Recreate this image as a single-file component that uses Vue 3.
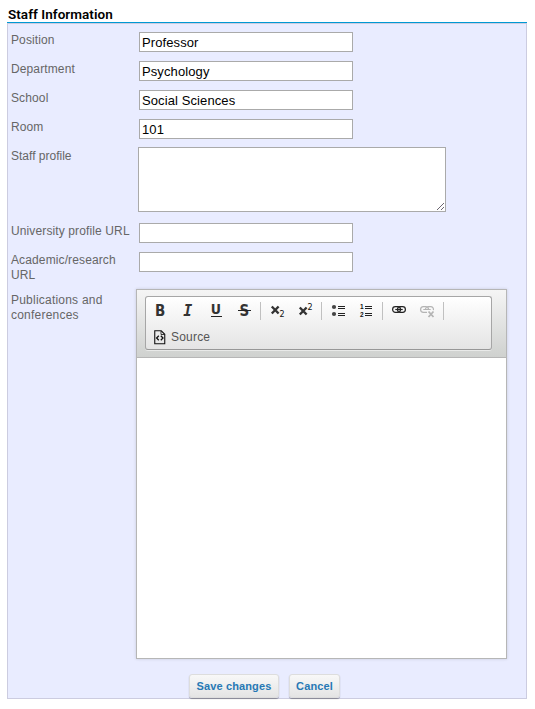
<script setup>
import { ref } from 'vue'

const shortFields = ref([
  { label: 'Position', value: 'Professor' },
  { label: 'Department', value: 'Psychology' },
  { label: 'School', value: 'Social Sciences' },
  { label: 'Room', value: '101' },
])
const linkFields = ref([
  { label: 'University profile URL', value: '' },
  { label: 'Academic/research URL', value: '' },
])
const profile = ref('')
</script>

<template>
  <form class="page" @submit.prevent>
    <h1 class="title">Staff Information</h1>
    <section class="panel">
      <div v-for="f in shortFields" :key="f.label" class="row">
        <label class="label">{{ f.label }}</label>
        <input v-model="f.value" class="input" type="text" />
      </div>
      <div class="row profile-row">
        <label class="label">Staff profile</label>
        <div class="area-wrap">
          <textarea v-model="profile" class="area"></textarea>
          <svg class="grip" width="8" height="8" shape-rendering="crispEdges">
            <g fill="#6b6570">
              <rect v-for="i in 7" :key="'a' + i" :x="i - 1" :y="7 - i" width="1" height="1" />
              <rect v-for="i in 3" :key="'b' + i" :x="i + 3" :y="7 - i" width="1" height="1" />
            </g>
          </svg>
        </div>
      </div>
      <div v-for="f in linkFields" :key="f.label" class="row">
        <label class="label">{{ f.label }}</label>
        <input v-model="f.value" class="input" type="text" />
      </div>
      <div class="row editor-row">
        <label class="label">Publications and conferences</label>
        <div class="editor">
          <div class="toolbar">
            <div class="group">
              <div class="tools">
                <svg class="tool" viewBox="0 0 28 26"><text x="9" y="17.6" class="glyph">B</text></svg>
                <svg class="tool" viewBox="0 0 28 26"><text x="9.3" y="17.6" class="glyph slant">I</text></svg>
                <svg class="tool" viewBox="0 0 28 26">
                  <text x="8.8" y="16.4" class="glyph under">U</text>
                  <rect x="9" y="18" width="11" height="1" fill="#222" />
                </svg>
                <svg class="tool" viewBox="0 0 28 26">
                  <text x="9.4" y="17.6" class="glyph">S</text>
                  <rect x="8" y="12" width="13" height="1" fill="#222" />
                </svg>
                <i class="sep"></i>
                <svg class="tool" viewBox="0 0 28 26">
                  <path class="cross" d="M8.8 8.5l6.8 7M15.6 8.5l-6.8 7" />
                  <text x="16.4" y="19" class="tiny">2</text>
                </svg>
                <svg class="tool" viewBox="0 0 28 26">
                  <path class="cross" d="M8.8 9.5l6.8 7M15.6 9.5l-6.8 7" />
                  <text x="16.4" y="11.5" class="tiny">2</text>
                </svg>
                <i class="sep"></i>
                <svg class="tool" viewBox="0 0 28 26">
                  <circle cx="10" cy="9" r="2.1" fill="#444" />
                  <circle cx="10" cy="16" r="2.1" fill="#444" />
                  <path class="lines" d="M14 8.5h7M14 10.5h7M14 15.5h7M14 17.5h7" />
                </svg>
                <svg class="tool" viewBox="0 0 28 26">
                  <text x="8" y="11" class="tiny num">1</text>
                  <text x="8" y="19" class="tiny num">2</text>
                  <path class="lines" d="M13 8.5h7M13 10.5h7M13 15.5h7M13 17.5h7" />
                </svg>
                <i class="sep"></i>
                <svg class="tool" viewBox="0 0 28 26">
                  <g class="chain">
                    <rect x="7.6" y="8.6" width="7.9" height="5.8" rx="2.8" />
                    <rect x="12.5" y="8.6" width="7.9" height="5.8" rx="2.8" />
                    <path d="M10.3 11.5h7.4" />
                  </g>
                </svg>
                <svg class="tool" viewBox="0 0 28 26">
                  <g class="chain off">
                    <path d="M14 14.4h-3.6a2.8 2.9 0 0 1 0-5.8h2.3a2.8 2.9 0 0 1 2.8 2.9M12.5 11.5a2.8 2.9 0 0 1 2.8-2.9h2.3a2.8 2.9 0 0 1 2.8 3.6M10.3 11.5h7.4" />
                    <path d="M15.5 13.5l5 5.5M20.5 13.5l-5 5.5" stroke-width="1.8" />
                  </g>
                </svg>
                <i class="sep"></i>
              </div>
              <button type="button" class="source">
                <svg width="12" height="15" viewBox="0 0 12 15" fill="none" stroke="#111">
                  <path d="M.75.75h6.5l3.5 3.5v9.5h-10z" stroke-width="1.1" />
                  <path d="M7 1v3.5h3.5" stroke-width=".8" />
                  <path d="M4.8 5.8L2.6 8l2.2 2.2M6.8 5.8L9 8l-2.2 2.2" stroke-width="1.3" />
                </svg>
                <span>Source</span>
              </button>
            </div>
          </div>
          <div class="canvas" contenteditable="true"></div>
        </div>
      </div>
      <div class="actions">
        <button class="btn save" type="submit">Save changes</button>
        <button class="btn cancel" type="button">Cancel</button>
      </div>
    </section>
  </form>
</template>

<style>
body {
  background: #fff;
}
</style>

<style scoped>
* {
  box-sizing: border-box;
}
.page {
  width: 535px;
  height: 709px;
  padding: 0 8px 0 7px;
  font-family: "Liberation Sans", Arial, sans-serif;
}
.title {
  margin: 0;
  height: 23px;
  padding: 7px 0 0 1px;
  border-bottom: 1px solid #0099d4;
  font: 600 13.5px/15px Roboto, "Liberation Sans", sans-serif;
  letter-spacing: 0.05px;
  color: #000;
  white-space: nowrap;
}
.panel {
  height: 676px;
  padding: 8px 0 0 3px;
  border: 1px solid #cccce0;
  background: #e9ecff;
}
.row {
  display: grid;
  grid-template-columns: 128px 1fr;
  align-items: start;
  height: 20px;
  margin-bottom: 9px;
}
.label {
  width: 122px;
  padding-top: 1px;
  font-size: 12px;
  line-height: 15px;
  letter-spacing: 0.12px;
  color: #666;
}
.input {
  width: 214px;
  height: 20px;
  margin: 0;
  padding: 1px 2px;
  border: 1px solid #aaa;
  border-radius: 0;
  outline: 0;
  background: #fff;
  font: 13px/16px "Liberation Sans", Arial, sans-serif;
  letter-spacing: 0.1px;
  color: #000;
}
.profile-row {
  height: 65px;
  margin: -1px 0 11px;
  grid-template-columns: 127px 1fr;
}
.profile-row .label {
  padding-top: 2px;
  letter-spacing: 0;
}
.area-wrap {
  position: relative;
  width: 308px;
  height: 65px;
}
.area {
  display: block;
  width: 100%;
  height: 100%;
  margin: 0;
  padding: 2px;
  border: 1px solid #aaa;
  outline: 0;
  resize: none;
  font: 13px "Liberation Sans", Arial, sans-serif;
}
.grip {
  position: absolute;
  right: 1px;
  bottom: 1px;
}
.editor-row {
  grid-template-columns: 125px 371px;
  height: 370px;
  margin: 17px 0 15px;
}
.editor-row .label {
  width: 110px;
  padding-top: 4px;
  letter-spacing: 0.22px;
}
.editor {
  display: flex;
  flex-direction: column;
  height: 370px;
  border: 1px solid #b6b6b6;
  background: #fff;
  box-shadow: 0 0 3px rgba(0, 0, 0, 0.15);
}
.toolbar {
  height: 68px;
  padding: 6px 8px;
  border-bottom: 1px solid #b6b6b6;
  background: linear-gradient(#f5f5f5, #cfd1cf);
}
.group {
  width: 347px;
  height: 54px;
  border: 1px solid #a6a6a6;
  border-bottom-color: #979797;
  border-radius: 3px;
  background: linear-gradient(#fff, #e4e4e4);
  box-shadow: 0 1px 0 rgba(255, 255, 255, 0.5);
}
.tools {
  display: flex;
  height: 28px;
  padding-top: 1px;
}
.tool {
  flex: none;
  width: 28px;
  height: 26px;
}
.sep {
  flex: none;
  width: 1px;
  height: 18px;
  margin: 4px 2px 0;
  background: #c0c0c0;
}
.glyph {
  font: 700 15px "DejaVu Sans", sans-serif;
  font-stretch: condensed;
  fill: #333;
}
.under {
  font-size: 14px;
}
.slant {
  font: italic 700 15px "DejaVu Sans Mono", monospace;
}
.tiny {
  font: 400 8px "DejaVu Sans", sans-serif;
  fill: #111;
}
.num {
  font: 700 6.5px "Liberation Sans", sans-serif;
}
.cross {
  fill: none;
  stroke: #333;
  stroke-width: 2.4;
}
.lines {
  fill: none;
  stroke: #222;
}
.chain {
  fill: none;
  stroke: #222;
  stroke-width: 1.2;
}
.off {
  stroke: #b4b4b4;
}
.source {
  display: flex;
  align-items: center;
  gap: 5px;
  height: 24px;
  margin: 0;
  padding: 0 0 0 8px;
  border: 0;
  background: none;
  font: 12px/15px "Liberation Sans", Arial, sans-serif;
  letter-spacing: 0.2px;
  color: #555;
}
.actions {
  display: flex;
  gap: 10px;
  padding-left: 178px;
}
.btn {
  height: 24px;
  margin: 0;
  padding: 0;
  border: 1px solid #ddd;
  border-radius: 3px;
  background: linear-gradient(#f8f8f8, #e4e4e4);
  box-shadow: 0 1px 1px rgba(0, 0, 0, 0.35);
  font: 700 11px/22px "Liberation Sans", Arial, sans-serif;
  letter-spacing: 0.12px;
  color: #2779b5;
}
.save {
  width: 90px;
}
.cancel {
  width: 51px;
}
</style>
